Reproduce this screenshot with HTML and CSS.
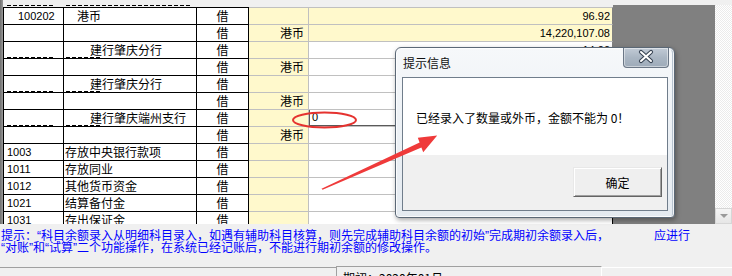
FILE: index.html
```html
<!DOCTYPE html>
<html lang="zh-CN">
<head>
<meta charset="utf-8">
<title>期初余额</title>
<link rel="stylesheet" href="styles.css">
</head>
<body>
<div class="app">
  <div class="workspace">
    <div class="leftbar"></div>
    <div class="gridcol">
      <div class="grid">
        <div class="row first">
          <div class="c c1 num lv2">100202</div><div class="c c2 lv2">港币</div><div class="c c3">借</div><div class="c c4"></div><div class="c c5 y num">96.92</div>
        </div>
        <div class="row">
          <div class="c c1"></div><div class="c c2"></div><div class="c c3">借</div><div class="c c4">港币</div><div class="c c5 y num">14,220,107.08</div>
        </div>
        <div class="row ghost">
          <div class="c c1"></div><div class="c c2 lv3">建行肇庆分行</div><div class="c c3">借</div><div class="c c4"></div><div class="c c5 num">14.00</div>
        </div>
        <div class="row">
          <div class="c c1"></div><div class="c c2"></div><div class="c c3">借</div><div class="c c4">港币</div><div class="c c5"></div>
        </div>
        <div class="row ghost">
          <div class="c c1"></div><div class="c c2 lv3">建行肇庆分行</div><div class="c c3">借</div><div class="c c4"></div><div class="c c5"></div>
        </div>
        <div class="row">
          <div class="c c1"></div><div class="c c2"></div><div class="c c3">借</div><div class="c c4">港币</div><div class="c c5"></div>
        </div>
        <div class="row ghost">
          <div class="c c1"></div><div class="c c2 lv3">建行肇庆端州支行</div><div class="c c3">借</div><div class="c c4"></div><div class="c c5 edit num"><span class="editbox">0</span></div>
        </div>
        <div class="row">
          <div class="c c1"></div><div class="c c2"></div><div class="c c3">借</div><div class="c c4">港币</div><div class="c c5"></div>
        </div>
        <div class="row lower">
          <div class="c c1 num">1003</div><div class="c c2">存放中央银行款项</div><div class="c c3">借</div><div class="c c4"></div><div class="c c5"></div>
        </div>
        <div class="row lower">
          <div class="c c1 num">1011</div><div class="c c2">存放同业</div><div class="c c3">借</div><div class="c c4"></div><div class="c c5"></div>
        </div>
        <div class="row lower">
          <div class="c c1 num">1012</div><div class="c c2">其他货币资金</div><div class="c c3">借</div><div class="c c4"></div><div class="c c5"></div>
        </div>
        <div class="row lower">
          <div class="c c1 num">1021</div><div class="c c2">结算备付金</div><div class="c c3">借</div><div class="c c4"></div><div class="c c5"></div>
        </div>
        <div class="row lower">
          <div class="c c1 num">1031</div><div class="c c2">存出保证金</div><div class="c c3">借</div><div class="c c4"></div><div class="c c5"></div>
        </div>
      </div>
    </div>
    <div class="darkarea"></div>
    <div class="vscroll">
      <div class="sbtn"><span class="tri"></span></div>
    </div>
  </div>
  <div class="hint">
    <div>提示：“科目余额录入从明细科目录入，如遇有辅助科目核算，则先完成辅助科目余额的初始”完成期初余额录入后，<span class="gap">应进行</span></div>
    <div>“对账”和“试算”二个功能操作，在系统已经记账后，不能进行期初余额的修改操作。</div>
  </div>
  <div class="status">
    <div class="panel p1"></div>
    <div class="panel p2">期初：2020年01月</div>
    <div class="panel p3"></div>
  </div>
</div>

<div class="dialog">
  <div class="dlg-titlebar">
    <div class="dlg-title">提示信息</div>
    <div class="dlg-close">
      <svg width="46" height="20" viewBox="0 0 46 20">
        <path d="M18 5 L28 14 M28 5 L18 14" stroke="#3a4655" stroke-width="4.2" stroke-linecap="round" fill="none"/>
        <path d="M18 5 L28 14 M28 5 L18 14" stroke="#ffffff" stroke-width="2" stroke-linecap="round" fill="none"/>
      </svg>
    </div>
  </div>
  <div class="dlg-body">
    <div class="dlg-msg">已经录入了数量或外币，金额不能为 0！</div>
    <div class="dlg-foot"><button class="btn">确定</button></div>
  </div>
</div>

<svg class="marks" width="732" height="276" viewBox="0 0 732 276">
  <ellipse cx="324.5" cy="120" rx="31.5" ry="7.5" fill="none" stroke="#e5322f" stroke-width="2"/>
  <polygon points="321.5,188.8 419.6,142.4 417.8,137.8 437.2,135.6 423.2,152.2 421.4,147.4 322.6,189.8" fill="#ef3a3a"/>
</svg>
</body>
</html>
```
FILE: styles.css
```css
html, body {
  margin: 0;
  padding: 0;
}
body {
  width: 732px;
  height: 276px;
  overflow: hidden;
  background: #f0f0f0;
  position: relative;
  font-family: "Noto Sans CJK SC", sans-serif;
  font-size: 12px;
  color: #000;
}
.app {
  display: flex;
  flex-direction: column;
  height: 276px;
}
.workspace {
  display: flex;
  height: 224px;
  overflow: hidden;
}
.leftbar {
  width: 3px;
  background: linear-gradient(to right, #6f6f6f, #9a9a9a);
  flex: none;
}
.gridcol {
  flex: none;
  padding-top: 7px;
  background-color: #f0f0f0;
  background-image:
    repeating-linear-gradient(to right, #000 0 4px, transparent 4px 6px),
    repeating-linear-gradient(to right, #000 0 4px, transparent 4px 6px);
  background-repeat: no-repeat;
  background-size: 46px 1px, 124px 1px;
  background-position: 4px 5px, 63px 5px;
}
.grid {
  display: flex;
  flex-direction: column;
}
.row {
  display: grid;
  grid-template-columns: 61px 133px 52px 60px 304px;
  height: 17px;
}
.row.first {
  height: 18px;
}
.c {
  box-sizing: border-box;
  border-bottom: 1px solid #000;
  border-right: 1px solid #000;
  line-height: 16px;
  white-space: nowrap;
  overflow: hidden;
  background-color: #fff;
}
.row.first .c {
  border-top: 1px solid #000;
}
.row.first .c4, .row.first .c5 {
  border-top-color: #c0c0c0;
}
.row.ghost .c1 {
  background-image: repeating-linear-gradient(to right, #000 0 4px, transparent 4px 6px);
  background-repeat: no-repeat;
  background-size: 46px 1px;
  background-position: 3px 15px;
}
.row.ghost .c2 {
  background-image: repeating-linear-gradient(to right, #000 0 4px, transparent 4px 6px);
  background-repeat: no-repeat;
  background-size: 34px 1px;
  background-position: 2px 15px;
}
.c1 {
  border-left: 1px solid #000;
  padding-left: 3px;
}
.c1.lv2 {
  padding-left: 14px;
}
.c2 {
  padding-left: 1px;
}
.c2.lv2 {
  padding-left: 13px;
}
.c2.lv3 {
  padding-left: 26px;
}
.c3 {
  text-align: center;
}
.c4 {
  background-color: #fff9cc;
  border-bottom-color: #c0c0c0;
  border-right-color: #c0c0c0;
  text-align: right;
  padding-right: 4px;
}
.c5 {
  border-bottom-color: #c0c0c0;
  border-right-color: #808080;
  text-align: right;
  padding-right: 2px;
}
.row.lower .c5 {
  border-right-color: #000;
}
.c5.y {
  background-color: #fff9cc;
}
.num {
  font-family: "Liberation Sans", sans-serif;
  font-size: 11px;
}
.c5.edit {
  padding: 0;
  text-align: left;
}
.editbox {
  display: block;
  box-sizing: border-box;
  height: 17px;
  margin-top: -1px;
  border: 1px solid #5a5a5a;
  padding-left: 2px;
  line-height: 15px;
  background: #fff;
}
.darkarea {
  flex: 1;
  margin-top: 5px;
  background: #808080;
}
.vscroll {
  width: 17px;
  flex: none;
  margin-top: 5px;
  background-color: #f4f4f4;
  background-image: repeating-conic-gradient(#ffffff 0 25%, #ebebeb 0 50%);
  background-size: 2px 2px;
  display: flex;
  flex-direction: column;
  justify-content: flex-end;
}
.sbtn {
  height: 16px;
  box-sizing: border-box;
  border: 1px solid #d6d6d6;
  background: linear-gradient(#f5f5f5, #e6e6e6);
  display: flex;
  align-items: center;
  justify-content: center;
}
.tri {
  width: 0;
  height: 0;
  border-left: 4px solid transparent;
  border-right: 4px solid transparent;
  border-top: 4px solid #9a9a9a;
}
.hint {
  height: 42px;
  box-sizing: border-box;
  padding-top: 6px;
  padding-left: 1px;
  color: #0000ff;
  font-family: "Liberation Sans", "Noto Sans CJK SC", sans-serif;
  font-size: 12px;
  line-height: 12px;
  white-space: nowrap;
}
.gap {
  margin-left: 45px;
}
.status {
  display: flex;
  flex: 1;
  overflow: hidden;
}
.panel {
  box-sizing: border-box;
}
.p1 {
  width: 336px;
  margin-top: 1px;
  border-top: 1px solid #a0a0a0;
}
.p2 {
  width: 266px;
  border-top: 1px solid #a0a0a0;
  border-left: 1px solid #a0a0a0;
  border-right: 1px solid #ffffff;
  padding-left: 6px;
  padding-top: 5px;
  line-height: 12px;
  white-space: nowrap;
  overflow: hidden;
}
.p3 {
  flex: 1;
  margin-top: 1px;
  border-top: 1px solid #ffffff;
}

/* dialog */
.dialog {
  position: absolute;
  left: 395px;
  top: 47px;
  width: 280px;
  height: 171px;
  box-sizing: border-box;
  border: 1px solid #5b6876;
  border-radius: 6px 6px 4px 4px;
  background: linear-gradient(to bottom, #f6f8fa 0%, #eef2f6 40%, #e4eaf0 100%);
  box-shadow: 1px 2px 5px rgba(0, 0, 0, 0.35), inset 0 0 0 1px rgba(255, 255, 255, 0.8), inset -4px 0 0 -2px #b7c3cf;
  padding: 0 6px 6px 6px;
  display: flex;
  flex-direction: column;
  z-index: 2;
}
.dlg-titlebar {
  height: 29px;
  display: flex;
  align-items: flex-start;
  flex: none;
}
.dlg-title {
  margin-left: 1px;
  padding-top: 8px;
  line-height: 14px;
  font-size: 12px;
  color: #111;
}
.dlg-close {
  margin-left: auto;
  margin-right: -1px;
  width: 46px;
  height: 20px;
  box-sizing: border-box;
  border: 1px solid #6b7786;
  border-top: none;
  border-radius: 0 0 4px 4px;
  background: linear-gradient(to bottom, #c2cbd6 0%, #aab6c3 50%, #9eabb9 100%);
  box-shadow: inset 0 0 0 1px rgba(255, 255, 255, 0.45);
  display: flex;
  align-items: center;
  justify-content: center;
  overflow: hidden;
}
.dlg-close svg {
  display: block;
  flex: none;
  margin-top: -1px;
}
.dlg-body {
  flex: 1;
  display: flex;
  flex-direction: column;
  border: 1px solid #707d8b;
  background: #f0f0f0;
}
.dlg-msg {
  height: 77px;
  box-sizing: border-box;
  background: #fff;
  padding: 33px 0 0 13px;
  line-height: 14px;
  font-size: 12px;
  white-space: nowrap;
}
.dlg-foot {
  flex: 1;
  display: flex;
  justify-content: flex-end;
  align-items: flex-start;
  padding: 12px 5px 0 0;
}
.btn {
  width: 89px;
  height: 30px;
  box-sizing: border-box;
  margin: 0;
  padding: 0;
  font-family: "Noto Sans CJK SC", sans-serif;
  font-size: 12px;
  color: #000;
  background: #efefef;
  border: 1px solid;
  border-color: #e8e8e8 #646464 #646464 #e8e8e8;
  box-shadow: inset 1px 1px 0 #ffffff, inset -1px -1px 0 #a0a0a0;
}
.marks {
  position: absolute;
  left: 0;
  top: 0;
  pointer-events: none;
  z-index: 3;
}
```
